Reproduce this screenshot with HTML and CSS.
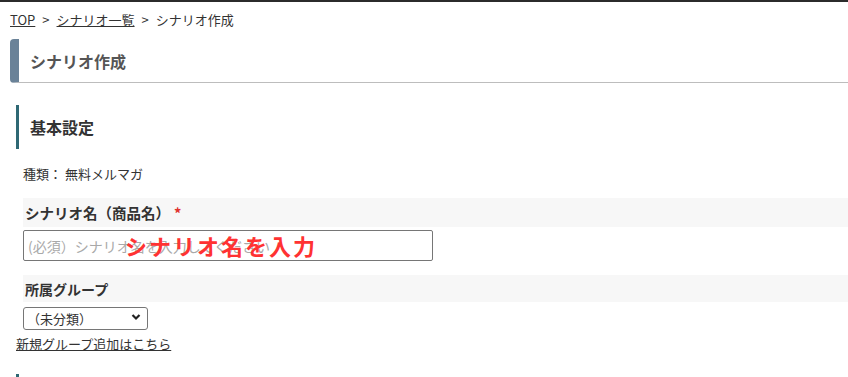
FILE: index.html
```html
<!DOCTYPE html>
<html lang="ja">
<head>
<meta charset="utf-8">
<title>シナリオ作成</title>
<link rel="stylesheet" href="styles.css">
</head>
<body>
<div class="topbar"></div>
<main class="page">
  <nav class="crumbs">
    <a href="#">TOP</a><span class="sep">&gt;</span><a href="#">シナリオ一覧</a><span class="sep">&gt;</span><span>シナリオ作成</span>
  </nav>
  <h1 class="page-title">シナリオ作成</h1>
  <section class="section">
    <h2 class="sec-head">基本設定</h2>
    <div class="fields">
      <p class="kind">種類：&nbsp;無料メルマガ</p>
      <div class="label-row">シナリオ名（商品名）<span class="req">*</span></div>
      <div class="input-wrap">
        <input class="text-input" type="text" placeholder="(必須）シナリオ名を入力してください">
        <span class="annot">シナリオ名を入力</span>
      </div>
      <div class="label-row short">所属グループ</div>
      <div class="select-wrap">
        <select class="group-select">
          <option>（未分類）</option>
        </select>
        <svg class="chev" width="10" height="8" viewBox="0 0 10 8"><path d="M1.5 2 L5 5.5 L8.5 2" fill="none" stroke="#222" stroke-width="2.2"/></svg>
      </div>
    </div>
    <a class="addlink" href="#">新規グループ追加はこちら</a>
  </section>
  <div class="sec-head next"></div>
</main>
</body>
</html>
```
FILE: styles.css
```css
html, body {
  margin: 0;
  padding: 0;
  background: #fff;
}
body {
  font-family: "Noto Sans CJK JP", "Noto Sans", sans-serif;
  color: #333;
  overflow: hidden;
  width: 848px;
  height: 377px;
}
.topbar {
  height: 2px;
  background: #2b2b2b;
}
.page {
  padding-left: 10px;
}
.crumbs {
  margin-top: 8px;
  height: 20px;
  line-height: 20px;
  font-size: 13px;
  color: #333;
  display: flex;
  align-items: center;
}
.crumbs a {
  color: #333;
  text-decoration: underline;
}
.crumbs .sep {
  margin: 0 7px;
}
.page-title {
  margin: 9px 0 0 0;
  height: 43px;
  border-left: 9px solid #6a8298;
  border-bottom: 1px solid #bdbdbd;
  border-radius: 4px 0 0 4px;
  padding-left: 11px;
  display: flex;
  align-items: center;
  font-size: 16px;
  font-weight: bold;
  color: #555;
}
.section {
  padding-left: 6px;
}
.sec-head {
  margin: 22px 0 0 0;
  height: 44px;
  border-left: 3px solid #2e6874;
  padding-left: 11px;
  display: flex;
  align-items: center;
  font-size: 16px;
  font-weight: bold;
  color: #333;
}
.sec-head.next {
  margin-top: 21px;
  margin-left: 6px;
}
.fields {
  padding-left: 7px;
}
.kind {
  margin: 15px 0 0 0;
  height: 20px;
  line-height: 20px;
  font-size: 13px;
  color: #333;
}
.label-row {
  margin-top: 14px;
  height: 29px;
  background: #f7f7f7;
  padding-left: 2px;
  display: flex;
  align-items: center;
  font-size: 14.5px;
  font-weight: bold;
  color: #333;
}
.label-row.short {
  height: 27px;
  font-size: 14px;
}
.req {
  color: #e0322e;
  margin-left: 4px;
  font-weight: bold;
}
.input-wrap {
  position: relative;
  margin-top: 3px;
  width: 410px;
  height: 31px;
}
.text-input {
  box-sizing: border-box;
  width: 410px;
  height: 31px;
  border: 1px solid #767676;
  border-radius: 2px;
  padding: 0 4px;
  font-family: "Noto Sans CJK JP", sans-serif;
  font-size: 14px;
  color: #333;
  background: #fff;
}
.text-input::placeholder {
  color: #a9a9a9;
}
.annot {
  position: absolute;
  left: 102px;
  top: 1px;
  font-size: 22px;
  line-height: 28px;
  font-weight: bold;
  letter-spacing: 2px;
  color: #ff3232;
  white-space: nowrap;
}
.select-wrap {
  position: relative;
  margin-top: 3px;
  width: 125px;
  height: 23px;
}
.group-select {
  box-sizing: border-box;
  width: 125px;
  height: 23px;
  border: 1px solid #767676;
  border-radius: 3px;
  background: #fff;
  padding: 0 0 0 3px;
  font-family: "Noto Sans CJK JP", sans-serif;
  font-size: 13px;
  color: #333;
  appearance: none;
  -webkit-appearance: none;
}
.chev {
  position: absolute;
  right: 7px;
  top: 8px;
  pointer-events: none;
}
.addlink {
  display: block;
  margin-top: 7px;
  height: 18px;
  line-height: 18px;
  font-size: 13px;
  color: #333;
  text-decoration: underline;
  width: max-content;
}
```
